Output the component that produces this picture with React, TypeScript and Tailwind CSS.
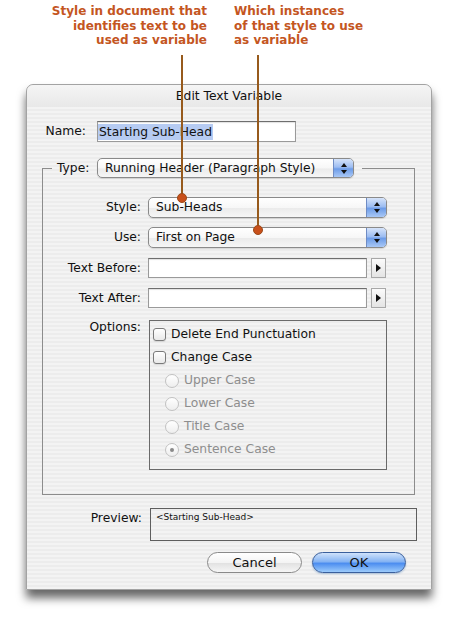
import React from "react";

function Stepper() {
  return (
    <div className="w-[20px] shrink-0 border-l border-[#6f8cc4] bg-[linear-gradient(#d6e4fa,#9dbdf2_45%,#6d9ce8_55%,#a9c8f6)] flex flex-col items-center justify-center gap-[3px]">
      <div className="w-0 h-0 border-x-[3px] border-x-transparent border-b-[4px] border-b-[#111]" />
      <div className="w-0 h-0 border-x-[3px] border-x-transparent border-t-[4px] border-t-[#111]" />
    </div>
  );
}

function Popup({ text, className }: { text: string; className: string }) {
  return (
    <div
      className={
        "flex rounded-[5px] border border-[#8a8a8a] overflow-hidden bg-[linear-gradient(#ffffff,#f7f7f7_50%,#ebebeb_55%,#f6f6f6)] shadow-[0_1px_1px_rgba(0,0,0,0.12)] " +
        className
      }
    >
      <span className="flex-1 pl-[7px] flex items-center whitespace-nowrap">{text}</span>
      <Stepper />
    </div>
  );
}

function TextField({ className }: { className: string }) {
  return (
    <div
      className={
        "bg-white border border-[#9a9a9a] border-t-[#6e6e6e] shadow-[inset_0_1px_1px_rgba(0,0,0,0.12)] " +
        className
      }
    />
  );
}

function ArrowBtn() {
  return (
    <div className="ml-[4px] w-[15px] h-[20px] border border-[#a8a8a8] bg-[linear-gradient(#fbfbfb,#e4e4e4)] flex items-center justify-center">
      <div className="w-0 h-0 border-y-[4px] border-y-transparent border-l-[5px] border-l-[#111]" />
    </div>
  );
}

function Checkbox({ label }: { label: string }) {
  return (
    <div className="flex items-center h-[23px] pl-[3px]">
      <div className="w-[13px] h-[13px] rounded-[3px] border border-[#7a7a7a] bg-[linear-gradient(#ffffff,#e9e9e9)] shadow-[0_1px_1px_rgba(0,0,0,0.1)]" />
      <span className="ml-[5px] text-[#111]">{label}</span>
    </div>
  );
}

function Radio({ label, on }: { label: string; on?: boolean }) {
  return (
    <div className="flex items-center h-[23px] pl-[15px]">
      <div className="w-[14px] h-[14px] rounded-full border border-[#c2c2c2] bg-[linear-gradient(#ffffff,#eeeeee)] flex items-center justify-center">
        {on ? <div className="w-[4px] h-[4px] rounded-full bg-[#8a8a8a]" /> : null}
      </div>
      <span className="ml-[5px] text-[#8e8e8e]">{label}</span>
    </div>
  );
}

export default function App() {
  return (
    <div className="relative w-[450px] h-[631px] overflow-hidden bg-white font-['DejaVu_Sans',sans-serif]">
      {/* annotations */}
      <div className="flex h-[84px] pt-[4px] text-[12px] font-bold leading-[14.5px] text-[#c4561f]">
        <div className="w-[207px] text-right">
          Style in document that
          <br />
          identifies text to be
          <br />
          used as variable
        </div>
        <div className="ml-[27px]">
          Which instances
          <br />
          of that style to use
          <br />
          as variable
        </div>
      </div>

      {/* dialog */}
      <div className="ml-[26px] w-[406px] h-[506px] rounded-t-[7px] border border-[#a3a3a3] bg-[repeating-linear-gradient(180deg,#ececec_0px,#ececec_2px,#f3f3f3_2px,#f3f3f3_4px)] shadow-[0_8px_10px_rgba(0,0,0,0.6)] text-[12.3px] leading-[15px] text-[#111]">
        <div className="h-[22px] rounded-t-[7px] flex items-center justify-center bg-[linear-gradient(#f5f5f5,#e8e8e8)] text-[12.3px]">
          Edit Text Variable
        </div>

        {/* Name */}
        <div className="mt-[14px] flex items-center">
          <div className="w-[59px] text-right">Name:</div>
          <div className="ml-[11px] w-[199px] h-[21px] bg-white border border-[#9a9a9a] border-t-[#6e6e6e] shadow-[inset_0_1px_1px_rgba(0,0,0,0.12)] flex items-center">
            <span className="bg-[#b6cbf2] px-[1px] leading-[16px]">Starting Sub-Head</span>
          </div>
        </div>

        {/* group */}
        <fieldset className="mt-[16px] ml-[15px] w-[373px] border border-[#8c8c8c] pb-[24px]">
          <legend className="ml-[9px] pl-[5px] pr-[8px]">
            <div className="flex items-center">
              <span className="w-[33px]">Type:</span>
              <Popup text="Running Header (Paragraph Style)" className="ml-[7px] w-[257px] h-[20px]" />
            </div>
          </legend>

          <div className="mt-[19px] flex items-center">
            <div className="w-[98px] text-right">Style:</div>
            <Popup text="Sub-Heads" className="ml-[7px] w-[239px] h-[21px]" />
          </div>
          <div className="mt-[9px] flex items-center">
            <div className="w-[98px] text-right">Use:</div>
            <Popup text="First on Page" className="ml-[7px] w-[239px] h-[21px]" />
          </div>
          <div className="mt-[10px] flex items-center">
            <div className="w-[98px] text-right">Text Before:</div>
            <TextField className="ml-[7px] w-[219px] h-[20px]" />
            <ArrowBtn />
          </div>
          <div className="mt-[10px] flex items-center">
            <div className="w-[98px] text-right">Text After:</div>
            <TextField className="ml-[7px] w-[219px] h-[20px]" />
            <ArrowBtn />
          </div>
          <div className="mt-[12px] flex items-start">
            <div className="w-[98px] text-right pt-[0px]">Options:</div>
            <div className="ml-[8px] w-[238px] h-[150px] border border-[#6a6a6a] pt-[2px]">
              <Checkbox label="Delete End Punctuation" />
              <Checkbox label="Change Case" />
              <Radio label="Upper Case" />
              <Radio label="Lower Case" />
              <Radio label="Title Case" />
              <Radio label="Sentence Case" on />
            </div>
          </div>
        </fieldset>

        {/* preview */}
        <div className="mt-[13px] flex items-start">
          <div className="w-[115px] text-right pt-[3px]">Preview:</div>
          <div className="ml-[8px] w-[267px] h-[33px] border border-[#5e5e5e] pl-[5px] pt-[3px] text-[9px] leading-[11px]">
            &lt;Starting Sub-Head&gt;
          </div>
        </div>

        {/* buttons */}
        <div className="mt-[11px] flex justify-end pr-[25px]">
          <div className="w-[95px] h-[21px] rounded-full border border-[#8a8a8a] bg-[linear-gradient(#ffffff,#f4f4f4_50%,#e2e2e2_55%,#f6f6f6)] flex items-center justify-center text-[13px]">
            Cancel
          </div>
          <div className="ml-[10px] w-[94px] h-[21px] rounded-full border border-[#3a5f9c] bg-[linear-gradient(#cfe2fb,#86b4f3_45%,#4d8ef0_55%,#9ccbfb)] shadow-[0_1px_2px_rgba(0,80,160,0.3)] flex items-center justify-center text-[13px]">
            OK
          </div>
        </div>
      </div>

      {/* leader lines */}
      <div className="absolute left-[181px] top-[55px] w-[2px] h-[143px] bg-[#975a1c]" />
      <div className="absolute left-[177px] top-[193px] w-[10px] h-[10px] rounded-full bg-[#c9501b] border border-[#9a4a1a]" />
      <div className="absolute left-[257px] top-[55px] w-[2px] h-[175px] bg-[#975a1c]" />
      <div className="absolute left-[253px] top-[225px] w-[10px] h-[10px] rounded-full bg-[#c9501b] border border-[#9a4a1a]" />
    </div>
  );
}
